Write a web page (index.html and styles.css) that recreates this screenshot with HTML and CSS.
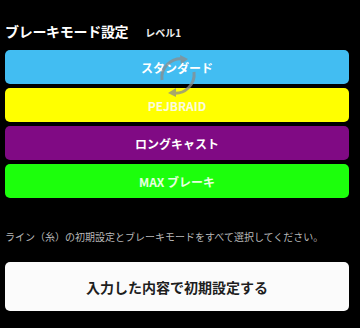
FILE: index.html
```html
<!DOCTYPE html>
<html lang="ja">
<head>
    <meta charset="UTF-8">
    <meta name="viewport" content="width=device-width, initial-scale=1.0">
    <title>ブレーキモード設定</title>
    <link rel="stylesheet" href="styles.css">
</head>
<body>
    <div class="page">
        <div class="title-row">
            <h1 class="title">ブレーキモード設定</h1>
            <span class="level">レベル1</span>
        </div>

        <div class="modes">
            <button type="button" class="mode mode-standard">スタンダード</button>
            <button type="button" class="mode mode-pejbraid">PEJBRAID</button>
            <button type="button" class="mode mode-long">ロングキャスト</button>
            <button type="button" class="mode mode-max">MAX ブレーキ</button>

            <!-- indicateur de chargement par-dessus les boutons -->
            <svg class="spinner" width="44" height="44" viewBox="0 0 44 44">
                <path d="M28 5 A19 19 0 0 0 6 26" fill="none" stroke="#8c8c8c" stroke-width="3"/>
                <path d="M16 39 A19 19 0 0 0 38 18" fill="none" stroke="#8c8c8c" stroke-width="3"/>
                <path d="M24 1 L32 5 L25 10 Z" fill="#8c8c8c"/>
                <path d="M20 34 L12 39 L20 43 Z" fill="#8c8c8c"/>
            </svg>
        </div>

        <p class="note">ライン（糸）の初期設定とブレーキモードをすべて選択してください。</p>

        <button type="button" class="submit">入力した内容で初期設定する</button>
    </div>
</body>
</html>
```

FILE: styles.css
```css
body {
    margin: 0;
    background-color: #000;
    font-family: "Noto Sans CJK JP", "Noto Sans", sans-serif;
    color: #fff;
}

.page {
    width: 344px;
    padding: 22px 11px 0 5px;
}

.title-row {
    display: flex;
    align-items: baseline;
    gap: 17px;
    height: 18px;
    margin-bottom: 10px;
}

.title {
    margin: 0;
    font-size: 14px;
    line-height: 18px;
    font-weight: bold;
    letter-spacing: -0.3px;
}

.level {
    font-size: 10px;
    font-weight: bold;
    color: #eee;
}

.modes {
    position: relative;
    display: flex;
    flex-direction: column;
    gap: 4px;
}

.mode {
    height: 34px;
    border: none;
    border-radius: 5px;
    font-family: inherit;
    font-size: 12px;
    font-weight: bold;
    color: #fff;
    padding: 0;
}

.mode-standard {
    background-color: #42bdf2;
}

.mode-pejbraid {
    background-color: #ffff00;
    color: #fbfbe0;
}

.mode-long {
    background-color: #800a84;
}

.mode-max {
    background-color: #1cff0c;
    color: #e8ffe0;
}

.spinner {
    position: absolute;
    left: 151px;
    top: 4px;
    opacity: 0.75;
}

.note {
    margin: 32px 0 0 0;
    font-size: 10px;
    line-height: 14px;
    color: #b8b8b8;
    white-space: nowrap;
}

.submit {
    display: block;
    width: 100%;
    height: 49px;
    margin-top: 18px;
    border: none;
    border-radius: 5px;
    background-color: #fbfbfb;
    font-family: inherit;
    font-size: 14px;
    font-weight: bold;
    color: #1e1e1e;
}
```
